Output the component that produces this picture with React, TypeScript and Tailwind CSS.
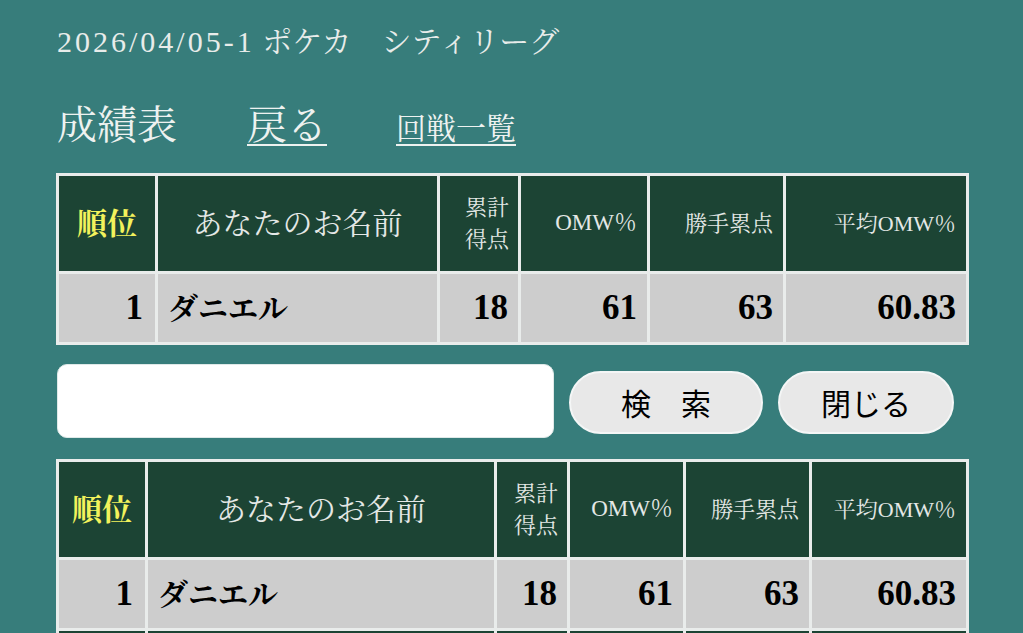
const serif = 'font-["Liberation_Serif","Noto_Serif_CJK_JP","Noto_Sans_CJK_JP",serif]';

type Cols = { rank: number; name: number; total: number; omw: number; pts: number; avg: number };

const rows = [{ rank: 1, name: 'ダニエル', total: 18, omw: 61, pts: 63, avg: '60.83' }];

function ScoreTable({ cols, more }: { cols: Cols; more?: boolean }) {
  const th = 'bg-[#1c4434] text-[#e4e8e6] align-middle';
  const td = 'bg-[#cdcdcd] text-black font-bold align-middle';
  return (
    <table className="border-separate border-spacing-[3px] bg-[#e9eceb] table-fixed w-[912px] -ml-px">
      <colgroup>
        <col style={{ width: cols.rank }} />
        <col style={{ width: cols.name }} />
        <col style={{ width: cols.total }} />
        <col style={{ width: cols.omw }} />
        <col style={{ width: cols.pts }} />
        <col style={{ width: cols.avg }} />
      </colgroup>
      <thead>
        <tr className="h-[95px]">
          <th className={`${th} text-[30px] font-bold text-[#f2f25c] text-center`}>順位</th>
          <th className={`${th} font-normal text-[30px] text-center`}>あなたのお名前</th>
          <th className={`${th} font-normal text-[22px] leading-[32px] text-right pr-[9px]`}>
            累計
            <br />
            得点
          </th>
          <th className={`${th} font-normal text-[23px] text-right pr-[10px]`}>OMW％</th>
          <th className={`${th} font-normal text-[22px] text-right pr-[10px]`}>勝手累点</th>
          <th className={`${th} font-normal text-[22px] text-right pr-[10px]`}>平均OMW％</th>
        </tr>
      </thead>
      <tbody>
        {rows.map((r) => (
          <tr key={r.rank} className="h-[68px]">
            <td className={`${td} text-[35px] text-right pr-[12px]`}>{r.rank}</td>
            <td className={`${td} text-[30px] text-left pl-[10px]`}>{r.name}</td>
            <td className={`${td} text-[35px] text-right pr-[10px]`}>{r.total}</td>
            <td className={`${td} text-[35px] text-right pr-[10px]`}>{r.omw}</td>
            <td className={`${td} text-[35px] text-right pr-[10px]`}>{r.pts}</td>
            <td className={`${td} text-[35px] text-right pr-[10px]`}>{r.avg}</td>
          </tr>
        ))}
        {more && (
          <tr className="h-[67px]">
            <td className="bg-[#1c4434]" />
            <td className="bg-[#1c4434]" />
            <td className="bg-[#1c4434]" />
            <td className="bg-[#1c4434]" />
            <td className="bg-[#1c4434]" />
            <td className="bg-[#1c4434]" />
          </tr>
        )}
      </tbody>
    </table>
  );
}

export default function App() {
  return (
    <div className={`min-h-screen bg-[#377d7b] pl-[57px] pt-[18px] ${serif}`}>
      {/* Event title */}
      <h1 className="text-[30px] leading-[48px] text-[#e8ecea] font-normal">
        <span className="tracking-[3px]">2026/04/05-1</span> ポケカ　シティリーグ
      </h1>

      {/* Nav */}
      <div className="flex items-end mt-[38px] h-[44px] text-[#eef2f0]">
        <span className="text-[40px] leading-[44px]">成績表</span>
        <a className="text-[40px] leading-[44px] underline decoration-2 underline-offset-[5px] ml-[70px]">戻る</a>
        <a className="text-[30px] leading-[38px] underline decoration-2 underline-offset-[5px] ml-[69px]">回戦一覧</a>
      </div>

      <div className="mt-[25px]">
        <ScoreTable cols={{ rank: 96, name: 279, total: 78, omw: 126, pts: 133, avg: 180 }} />
      </div>

      {/* Search */}
      <div className="flex items-center mt-[18px] h-[75px] font-['Noto_Sans_CJK_JP',sans-serif]">
        <input
          type="text"
          className="w-[497px] h-[74px] bg-white rounded-[10px] border border-[#dfe9e8] outline-none"
        />
        <button className="ml-[15px] w-[194px] h-[63px] mt-[4px] rounded-full bg-[#e8e8e8] border-2 border-[#f4f6f6] text-[30px] text-black">
          検　索
        </button>
        <button className="ml-[15px] w-[176px] h-[63px] mt-[4px] rounded-full bg-[#e8e8e8] border-2 border-[#f4f6f6] text-[30px] text-black">
          閉じる
        </button>
      </div>

      <div className="mt-[21px]">
        <ScoreTable cols={{ rank: 86, name: 346, total: 70, omw: 113, pts: 123, avg: 154 }} more />
      </div>
    </div>
  );
}
